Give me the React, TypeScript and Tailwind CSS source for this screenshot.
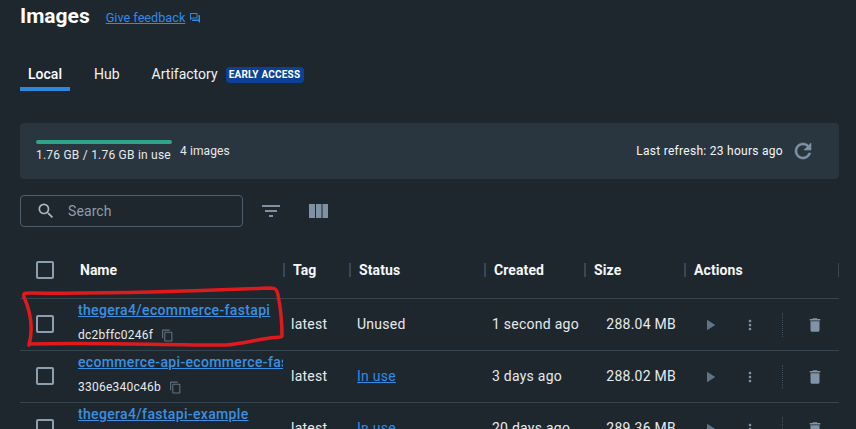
import { MdContentCopy, MdDelete, MdFilterList, MdMoreVert, MdOutlineForum, MdPlayArrow, MdSearch } from 'react-icons/md';

const images = [
	{ name: 'thegera4/ecommerce-fastapi', id: 'dc2bffc0246f', status: 'Unused', created: '1 second ago', size: '288.04 MB' },
	{ name: 'ecommerce-api-ecommerce-fastapi', id: '3306e340c46b', status: 'In use', created: '3 days ago', size: '288.02 MB' },
	{ name: 'thegera4/fastapi-example', id: 'a81f0c2de947', status: 'In use', created: '20 days ago', size: '289.36 MB' },
];

const columns = 'grid grid-cols-[50px_213px_66px_135px_100px_100px_155px]';

function Checkbox() {
	return <div className="h-[18px] w-[18px] rounded-[2px] border-2 border-[#8b9fb0]" />;
}

function HeaderCell({ label }: { label: string }) {
	return (
		<div className="flex items-center">
			<span className="mr-2 h-[14px] w-[2px] bg-[#36475a]" />
			<span className="text-sm font-bold tracking-[0.1px] text-[#f4f6f8]">{label}</span>
		</div>
	);
}

export default function App() {
	return (
		<div className="relative h-[429px] w-[856px] overflow-hidden bg-[#1e272e] pl-5 pr-[17px] font-['Roboto',sans-serif] text-[#e7eaed]">
			<header className="flex h-[32px] items-center">
				<h1 className="text-[21px] font-bold leading-none text-white">Images</h1>
				<a className="ml-4 mt-1 text-[12.7px] text-[#2e8be6] underline">Give feedback</a>
				<MdOutlineForum className="ml-1 mt-1 h-[12px] w-[12px] text-[#2e8be6]" />
			</header>

			<nav className="mt-[26px] flex h-[33px] items-start text-sm">
				<div className="flex h-[33px] w-[50px] justify-center border-b-4 border-[#2e86de] pt-[6px] font-medium text-white">Local</div>
				<div className="ml-6 pt-[6px] text-[#f0f2f4]">Hub</div>
				<div className="ml-8 pt-[6px] text-[#f0f2f4]">Artifactory</div>
				<span className="ml-2 mt-[9px] flex h-4 w-[78px] items-center justify-center rounded-[4px] bg-[#0b4297] text-[10px] font-bold tracking-[0.2px] text-white">
					EARLY ACCESS
				</span>
			</nav>

			<section className="mt-8 flex h-14 items-center justify-between rounded-[4px] bg-[#29353f] pl-4 pr-6">
				<div className="flex items-start">
					<div className="w-[136px]">
						<div className="h-1 rounded-[2px] bg-[#2fa38c]" />
						<div className="mt-[3px] whitespace-nowrap text-xs tracking-[0.22px]">1.76 GB / 1.76 GB in use</div>
					</div>
					<span className="ml-2 mt-[3px] text-xs tracking-[0.1px]">4 images</span>
				</div>
				<div className="flex items-center">
					<span className="text-xs tracking-[0.28px] text-[#f4f6f8]">Last refresh: 23 hours ago</span>
					<svg className="ml-2 h-6 w-6 text-[#7e92a4]" viewBox="0 0 24 24" fill="currentColor" stroke="currentColor" strokeWidth="0.6">
						<path d="M17.65 6.35C16.2 4.9 14.21 4 12 4c-4.42 0-7.99 3.58-7.99 8s3.57 8 7.99 8c3.73 0 6.84-2.55 7.73-6h-2.08c-.82 2.33-3.04 4-5.65 4-3.31 0-6-2.69-6-6s2.69-6 6-6c1.66 0 3.14.69 4.22 1.78L13 11h7V4l-2.35 2.35z" />
					</svg>
				</div>
			</section>

			<div className="mt-4 flex items-center">
				<div className="flex h-8 w-[223px] items-center rounded-[4px] border border-[#4d5e6c] pl-[15px]">
					<MdSearch className="h-5 w-5 text-[#a9b6c1]" />
					<span className="ml-3 text-sm tracking-[0.1px] text-[#8e9dab]">Search</span>
				</div>
				<MdFilterList className="ml-4 h-6 w-6 text-[#7e92a4]" />
				<svg className="ml-[26px] h-[14px] w-[19px] text-[#7e92a4]" viewBox="0 0 19 14" fill="currentColor">
					<rect x="0" width="6" height="14" />
					<rect x="7" width="5.5" height="14" />
					<rect x="13.5" width="5.5" height="14" />
				</svg>
			</div>

			<div className={`${columns} mt-[23px] h-[49px] items-center border-b border-[#36444f] pb-[8px]`}>
				<div className="pl-4">
					<Checkbox />
				</div>
				<div className="pl-[10px] text-sm font-bold text-[#f4f6f8]">Name</div>
				<HeaderCell label="Tag" />
				<HeaderCell label="Status" />
				<HeaderCell label="Created" />
				<HeaderCell label="Size" />
				<div className="flex items-center justify-between">
					<HeaderCell label="Actions" />
					<span className="h-[14px] w-px bg-[#36475a]" />
				</div>
			</div>

			{images.map((image) => (
				<div key={image.id} className={`${columns} h-[52px] items-center border-b border-[#36444f] pb-[1px] text-sm tracking-[0.25px]`}>
					<div className="pl-4">
						<Checkbox />
					</div>
					<div className="min-w-0 pb-[5px] pl-2">
						<div className="overflow-hidden whitespace-nowrap font-medium tracking-[0.34px] text-[#3b8fe0] underline">{image.name}</div>
						<div className="mt-[7px] flex items-center text-xs">
							{image.id}
							<MdContentCopy className="ml-2 h-[13px] w-[13px] text-[#62717f]" />
						</div>
					</div>
					<div className="pl-2">latest</div>
					<div className={image.status === 'In use' ? 'pl-2 text-[#2e8be6] underline' : 'pl-2'}>{image.status}</div>
					<div className="pl-2">{image.created}</div>
					<div className="pr-2 text-right">{image.size}</div>
					<div className="flex items-center pl-[17px] pt-[1px] text-[#5f7488]">
						<MdPlayArrow className="h-[18px] w-[18px]" />
						<MdMoreVert className="ml-[23px] h-[16px] w-[16px] text-[#8094a6]" />
						<span className="ml-[24px] h-6 border-l border-dotted border-[#3f4d59]" />
						<MdDelete className="ml-[23px] h-[18px] w-[18px] text-[#8094a6]" />
					</div>
				</div>
			))}

			<svg className="absolute left-0 top-0 h-[429px] w-[856px]" viewBox="0 0 856 429" fill="none">
				<path
					d="M29 345 C33 330 32 315 24 297 C23 293 24 293 30 293 C100 294 200 291 270 288 C276 288 277 290 278 295 C281 310 282 325 282 336 C282 337 280 337 270 338 C255 340 240 344 226 345 C160 345 90 342 29 344"
					stroke="#e0191c"
					strokeWidth="3.5"
					strokeLinecap="round"
					strokeLinejoin="round"
				/>
			</svg>
		</div>
	);
}
